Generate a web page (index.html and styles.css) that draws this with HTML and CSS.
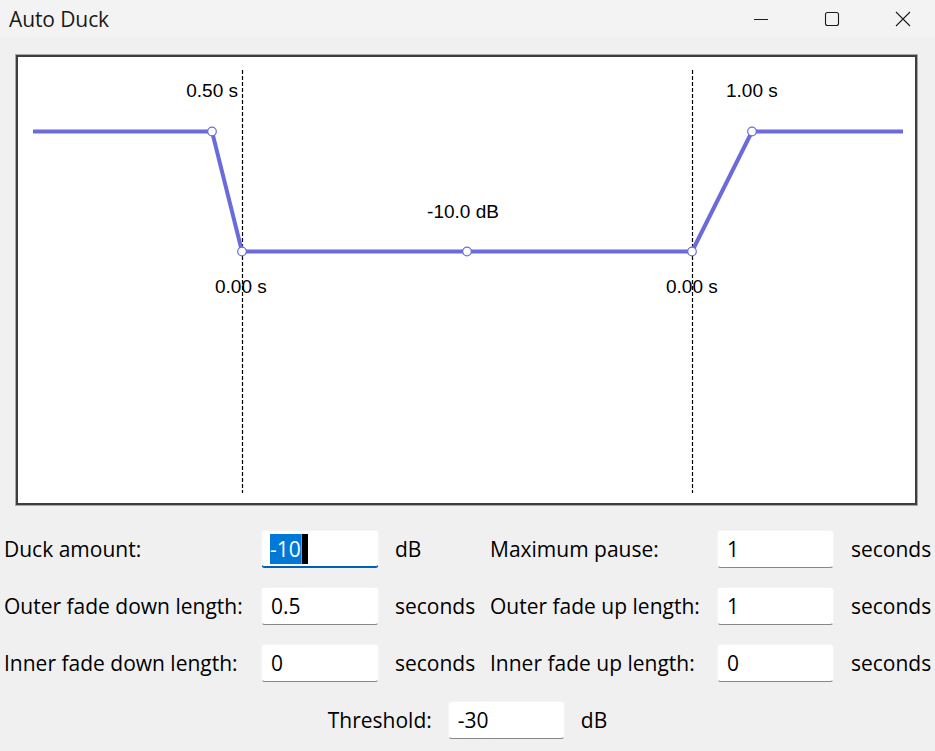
FILE: index.html
```html
<!DOCTYPE html>
<html>
<head>
<meta charset="utf-8">
<title>Auto Duck</title>
<link rel="stylesheet" href="styles.css">
</head>
<body>
<div class="titlebar">
  <div class="title">Auto Duck</div>
  <div class="controls">
    <svg class="ctl" width="16" height="16" viewBox="0 0 16 16"><path d="M1 8.5h14" stroke="#1b1b1b" stroke-width="1" fill="none"/></svg>
    <svg class="ctl" width="16" height="16" viewBox="0 0 16 16"><rect x="1.5" y="1.5" width="13" height="13" rx="2" stroke="#1b1b1b" stroke-width="1.1" fill="none"/></svg>
    <svg class="ctl" width="16" height="16" viewBox="0 0 16 16"><path d="M1 1L15 15M15 1L1 15" stroke="#1b1b1b" stroke-width="1.1" fill="none"/></svg>
  </div>
</div>

<div class="panel">
  <svg class="graph" width="897" height="446" viewBox="18 57 897 446">
    <rect x="18" y="57" width="897" height="446" fill="#fff"/>
    <line x1="242.5" y1="70" x2="242.5" y2="493" stroke="#000" stroke-width="1.2" stroke-dasharray="4 2"/>
    <line x1="692.5" y1="70" x2="692.5" y2="493" stroke="#000" stroke-width="1.2" stroke-dasharray="4 2"/>
    <polyline points="33,131.5 212,131.5 242,251.5 692,251.5 752,131.5 903,131.5" fill="none" stroke="#6b6bdb" stroke-width="4" stroke-linejoin="round"/>
    <g fill="#fff" stroke="#6b6bdb" stroke-width="1.2">
      <circle cx="212" cy="131.5" r="4.3"/>
      <circle cx="242" cy="251.5" r="4.3"/>
      <circle cx="467" cy="251.5" r="4.3"/>
      <circle cx="692" cy="251.5" r="4.3"/>
      <circle cx="752" cy="131.5" r="4.3"/>
    </g>
    <g class="glabel">
      <text x="238" y="97" text-anchor="end">0.50 s</text>
      <text x="726" y="97">1.00 s</text>
      <text x="463" y="218" text-anchor="middle">-10.0 dB</text>
      <text x="215" y="293">0.00 s</text>
      <text x="666" y="293">0.00 s</text>
    </g>
  </svg>
</div>

<div class="form">
  <div class="lbl">Duck amount:</div>
  <div class="field focus"><span class="sel">-10</span><span class="caret"></span></div>
  <div class="unit">dB</div>
  <div class="lbl">Maximum pause:</div>
  <div class="field">1</div>
  <div class="unit">seconds</div>

  <div class="lbl">Outer fade down length:</div>
  <div class="field">0.5</div>
  <div class="unit">seconds</div>
  <div class="lbl">Outer fade up length:</div>
  <div class="field">1</div>
  <div class="unit">seconds</div>

  <div class="lbl">Inner fade down length:</div>
  <div class="field">0</div>
  <div class="unit">seconds</div>
  <div class="lbl">Inner fade up length:</div>
  <div class="field">0</div>
  <div class="unit">seconds</div>
</div>

<div class="threshold">
  <div class="lbl">Threshold:</div>
  <div class="field">-30</div>
  <div class="lbl">dB</div>
</div>
</body>
</html>
```

FILE: styles.css
```css
html, body {
  margin: 0;
  padding: 0;
}
body {
  width: 935px;
  height: 751px;
  background: #f0f0f0;
  font-family: "Open Sans", "Noto Sans", sans-serif;
  color: #000;
  overflow: hidden;
}
.titlebar {
  height: 37px;
  background: #f3f3f3;
  display: flex;
  align-items: center;
  justify-content: space-between;
}
.title {
  padding-left: 9px;
  font-size: 21px;
  color: #1a1a1a;
  letter-spacing: -0.1px;
}
.controls {
  display: flex;
  align-items: center;
  padding-right: 24px;
  gap: 55px;
}
.ctl {
  display: block;
}
.panel {
  margin: 18px 0 0 16px;
  width: 897px;
  height: 446px;
  border: 2px solid #3d3d3d;
  box-shadow: 0 0 0 1px #a8a8a8;
  background: #fff;
}
.graph {
  display: block;
}
.glabel text {
  font-family: "Liberation Sans", Arial, sans-serif;
  font-size: 19px;
  fill: #000;
}
.form {
  margin-top: 25px;
  padding-left: 4px;
  display: grid;
  grid-template-columns: 257px 118px 111px 227px 117px auto;
  grid-auto-rows: 38px;
  row-gap: 19px;
  align-items: center;
  font-size: 21px;
}
.lbl {
  white-space: nowrap;
}
.unit {
  padding-left: 16px;
  white-space: nowrap;
}
.form .unit:nth-child(6n) {
  padding-left: 17px;
}
.field {
  height: 38px;
  box-sizing: border-box;
  background: #fff;
  border-radius: 4px;
  border: 1px solid #f4f4f4;
  border-bottom: 1px solid #878787;
  padding-left: 9px;
  display: flex;
  align-items: center;
  font-size: 21px;
}
.field.focus {
  border-bottom: 2px solid #005fb8;
  padding-left: 8px;
}
.sel {
  background: #0078d7;
  color: #fff;
  height: 30px;
  display: flex;
  align-items: center;
}
.caret {
  width: 7px;
  height: 30px;
  background: #000;
  border-left: 1px solid #e07a2a;
  box-sizing: border-box;
}
.threshold {
  margin-top: 19px;
  display: flex;
  justify-content: center;
  align-items: center;
  gap: 16px;
  font-size: 21px;
}
.threshold .field {
  width: 117px;
}
```
